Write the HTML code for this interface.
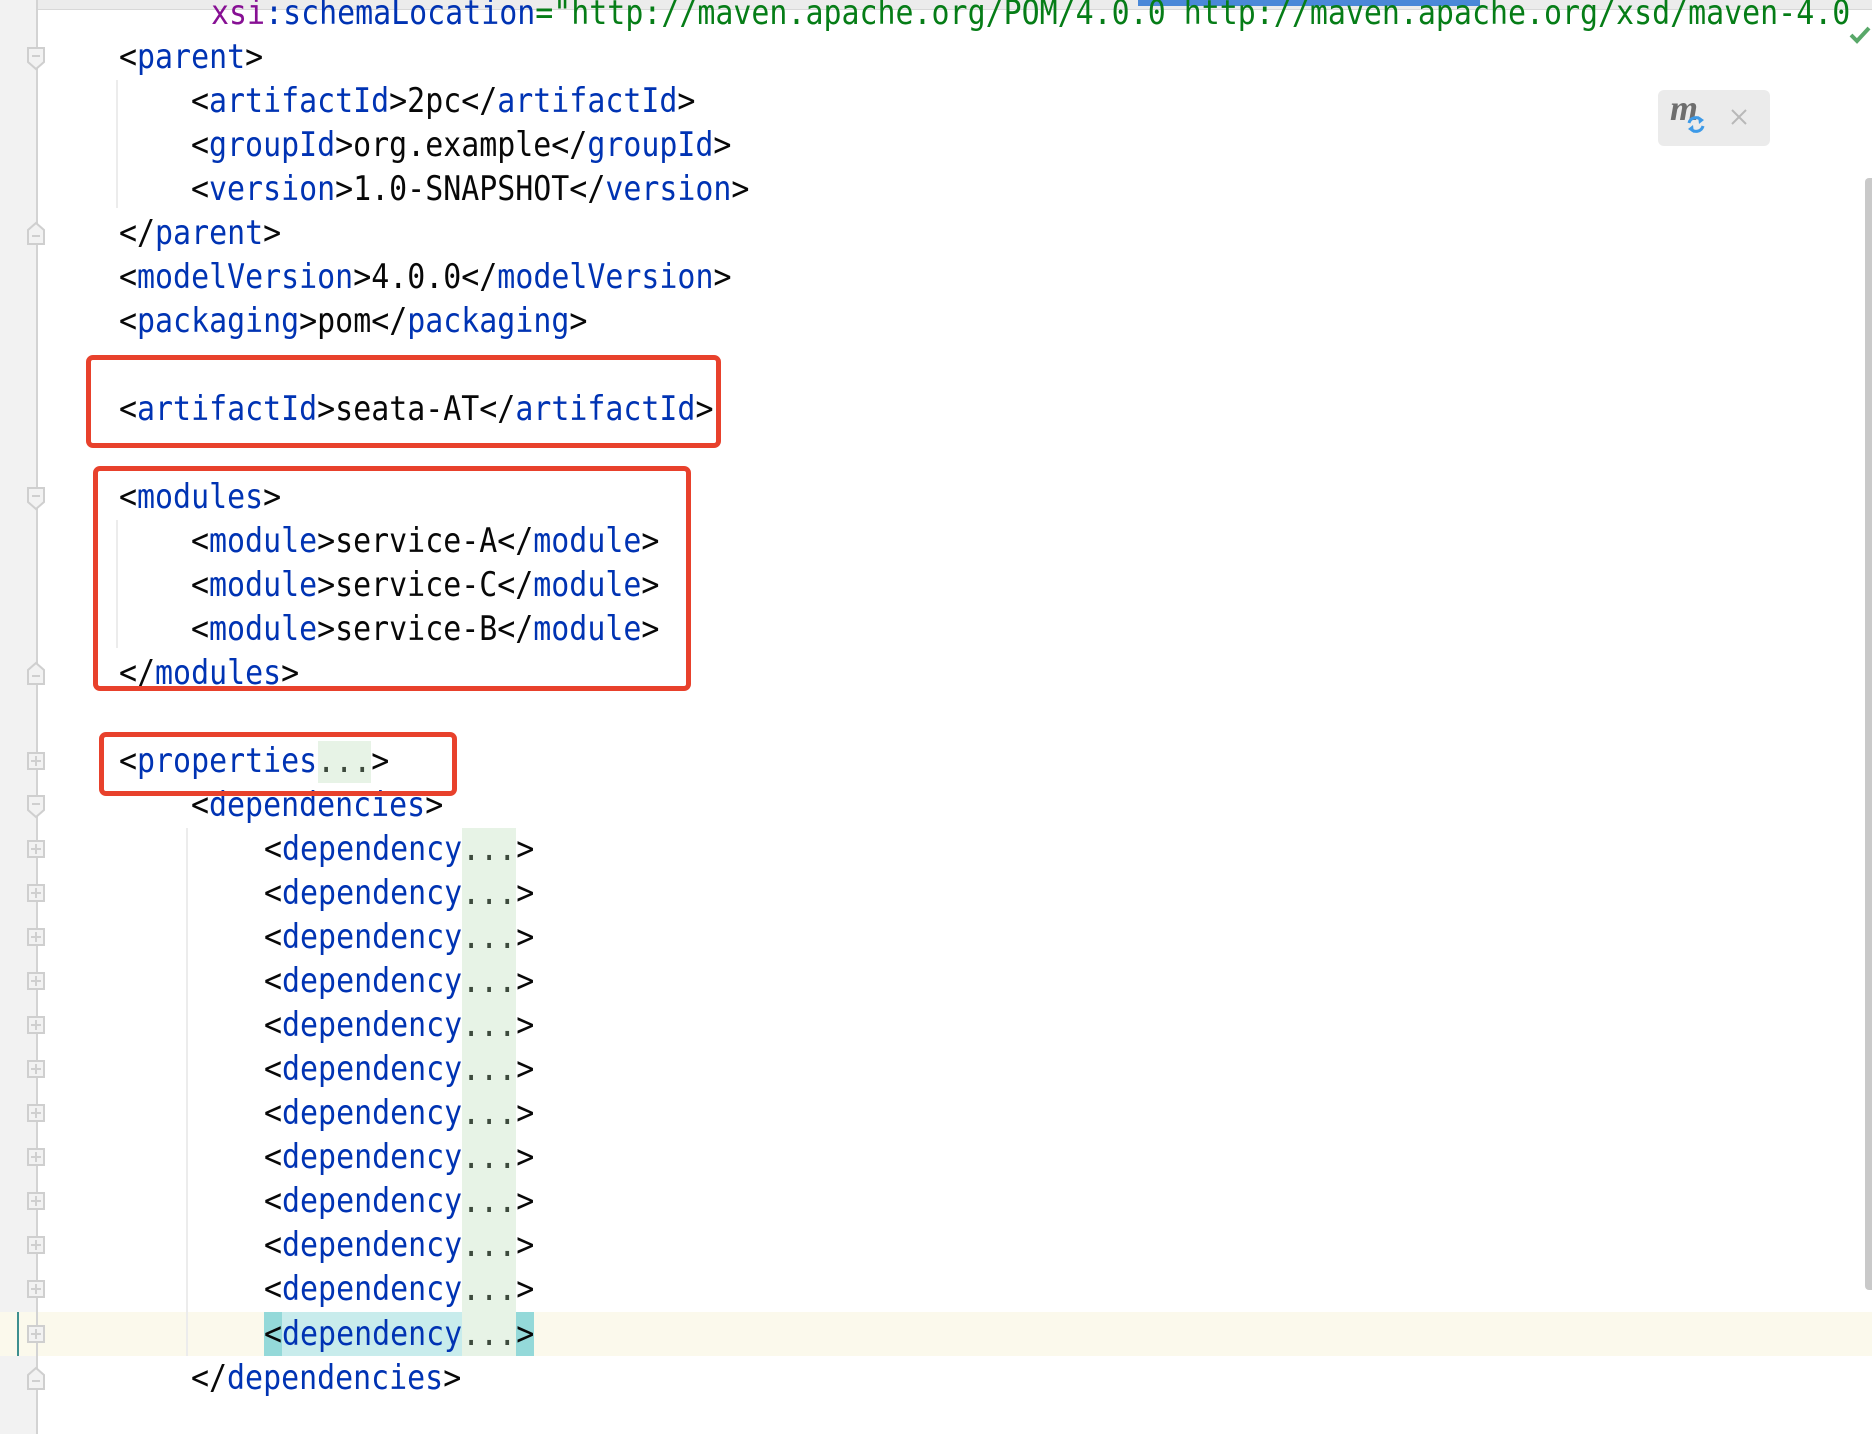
<!DOCTYPE html>
<html><head><meta charset="utf-8"><style>
html,body{margin:0;padding:0;width:1872px;height:1434px;overflow:hidden;background:#fff;position:relative}
.g{position:absolute;left:0;top:0;width:36px;height:1434px;background:#f2f2f2}
.gl{position:absolute;left:36px;top:0;width:2px;height:1434px;background:#d3d3d3}
.l{position:absolute;height:44px;line-height:44px;white-space:pre;font-family:"DejaVu Sans Mono","Liberation Mono",monospace;font-size:34px;color:#080808;transform:scaleX(.88);transform-origin:0 0}
.t{color:#0033b3}
.a{color:#871094}
.s{color:#067d17}
.box{position:absolute;border:5px solid #e8412c;border-radius:7px;box-sizing:border-box}
.f{position:absolute;left:27px}
.ig{position:absolute;width:2px;background:#ececec}
</style></head><body>
<div style="position:absolute;left:0;top:0;width:1872px;height:9px;background:#ececec"></div>
<div style="position:absolute;left:0;top:9px;width:1872px;height:1px;background:#d8d8d8"></div>
<div style="position:absolute;left:1138px;top:0;width:342px;height:6px;background:#4a88d8"></div>
<div class="g"></div>
<div style="position:absolute;left:0;top:1312px;width:1872px;height:44px;background:#fbf9ec"></div>
<div style="position:absolute;left:17px;top:1312px;width:2px;height:44px;background:#3d8f8f"></div>
<div class="gl"></div>

<div class="ig" style="left:116px;top:80px;height:128px"></div>
<div class="ig" style="left:116px;top:520px;height:128px"></div>
<div class="ig" style="left:186px;top:828px;height:528px"></div>

<div style="position:absolute;left:318px;top:741px;width:53px;height:42px;background:#e7f3e6"></div>
<div style="position:absolute;left:462px;top:828px;width:54px;height:528px;background:#e7f3e6"></div>
<div style="position:absolute;left:264px;top:1312px;width:18px;height:44px;background:#94d9d9"></div>
<div style="position:absolute;left:282px;top:1312px;width:180px;height:44px;background:#c8ecec"></div>
<div style="position:absolute;left:516px;top:1312px;width:18px;height:44px;background:#94d9d9"></div>

<div style="position:absolute;left:0;top:0;width:1850px;height:60px;overflow:hidden">
<div class="l" style="left:211px;top:-9px"><span class="a">xsi</span><span class="t">:schemaLocation</span><span class="s">="http://maven.apache.org/POM/4.0.0 http://maven.apache.org/xsd/maven-4.0.0.xsd"</span>&gt;</div>
</div>
<div class="l" style="left:119px;top:35px">&lt;<span class="t">parent</span>&gt;</div>
<div class="l" style="left:191px;top:79px">&lt;<span class="t">artifactId</span>&gt;2pc&lt;/<span class="t">artifactId</span>&gt;</div>
<div class="l" style="left:191px;top:123px">&lt;<span class="t">groupId</span>&gt;org.example&lt;/<span class="t">groupId</span>&gt;</div>
<div class="l" style="left:191px;top:167px">&lt;<span class="t">version</span>&gt;1.0-SNAPSHOT&lt;/<span class="t">version</span>&gt;</div>
<div class="l" style="left:119px;top:211px">&lt;/<span class="t">parent</span>&gt;</div>
<div class="l" style="left:119px;top:255px">&lt;<span class="t">modelVersion</span>&gt;4.0.0&lt;/<span class="t">modelVersion</span>&gt;</div>
<div class="l" style="left:119px;top:299px">&lt;<span class="t">packaging</span>&gt;pom&lt;/<span class="t">packaging</span>&gt;</div>
<div class="l" style="left:119px;top:387px">&lt;<span class="t">artifactId</span>&gt;seata-AT&lt;/<span class="t">artifactId</span>&gt;</div>
<div class="l" style="left:119px;top:475px">&lt;<span class="t">modules</span>&gt;</div>
<div class="l" style="left:191px;top:519px">&lt;<span class="t">module</span>&gt;service-A&lt;/<span class="t">module</span>&gt;</div>
<div class="l" style="left:191px;top:563px">&lt;<span class="t">module</span>&gt;service-C&lt;/<span class="t">module</span>&gt;</div>
<div class="l" style="left:191px;top:607px">&lt;<span class="t">module</span>&gt;service-B&lt;/<span class="t">module</span>&gt;</div>
<div class="l" style="left:119px;top:651px">&lt;/<span class="t">modules</span>&gt;</div>
<div class="l" style="left:119px;top:739px">&lt;<span class="t">properties</span><span style="color:#3d4a3d">...</span>&gt;</div>
<div class="l" style="left:191px;top:783px">&lt;<span class="t">dependencies</span>&gt;</div>
<div class="l" style="left:264px;top:827px">&lt;<span class="t">dependency</span><span style="color:#3d4a3d">...</span>&gt;</div>
<div class="l" style="left:264px;top:871px">&lt;<span class="t">dependency</span><span style="color:#3d4a3d">...</span>&gt;</div>
<div class="l" style="left:264px;top:915px">&lt;<span class="t">dependency</span><span style="color:#3d4a3d">...</span>&gt;</div>
<div class="l" style="left:264px;top:959px">&lt;<span class="t">dependency</span><span style="color:#3d4a3d">...</span>&gt;</div>
<div class="l" style="left:264px;top:1003px">&lt;<span class="t">dependency</span><span style="color:#3d4a3d">...</span>&gt;</div>
<div class="l" style="left:264px;top:1047px">&lt;<span class="t">dependency</span><span style="color:#3d4a3d">...</span>&gt;</div>
<div class="l" style="left:264px;top:1091px">&lt;<span class="t">dependency</span><span style="color:#3d4a3d">...</span>&gt;</div>
<div class="l" style="left:264px;top:1135px">&lt;<span class="t">dependency</span><span style="color:#3d4a3d">...</span>&gt;</div>
<div class="l" style="left:264px;top:1179px">&lt;<span class="t">dependency</span><span style="color:#3d4a3d">...</span>&gt;</div>
<div class="l" style="left:264px;top:1223px">&lt;<span class="t">dependency</span><span style="color:#3d4a3d">...</span>&gt;</div>
<div class="l" style="left:264px;top:1267px">&lt;<span class="t">dependency</span><span style="color:#3d4a3d">...</span>&gt;</div>
<div class="l" style="left:264px;top:1312px">&lt;<span class="t">dependency</span><span style="color:#3d4a3d">...</span>&gt;</div>
<div class="l" style="left:191px;top:1356px">&lt;/<span class="t">dependencies</span>&gt;</div>

<div class="box" style="left:86px;top:355px;width:635px;height:93px"></div>
<div class="box" style="left:93px;top:466px;width:598px;height:225px"></div>
<div class="box" style="left:99px;top:732px;width:358px;height:64px"></div>

<svg class="f" style="top:47px" width="18" height="24"><path d="M1 1H17V15L9 22L1 15Z" fill="#f2f2f2" stroke="#cfcfcf" stroke-width="2"/><path d="M5 9H13" stroke="#cfcfcf" stroke-width="2"/></svg>
<svg class="f" style="top:221px" width="18" height="24"><path d="M1 23H17V9L9 2L1 9Z" fill="#f2f2f2" stroke="#cfcfcf" stroke-width="2"/><path d="M5 15H13" stroke="#cfcfcf" stroke-width="2"/></svg>
<svg class="f" style="top:487px" width="18" height="24"><path d="M1 1H17V15L9 22L1 15Z" fill="#f2f2f2" stroke="#cfcfcf" stroke-width="2"/><path d="M5 9H13" stroke="#cfcfcf" stroke-width="2"/></svg>
<svg class="f" style="top:661px" width="18" height="24"><path d="M1 23H17V9L9 2L1 9Z" fill="#f2f2f2" stroke="#cfcfcf" stroke-width="2"/><path d="M5 15H13" stroke="#cfcfcf" stroke-width="2"/></svg>
<svg class="f" style="top:752px" width="18" height="18"><rect x="1" y="1" width="16" height="16" fill="#f2f2f2" stroke="#cfcfcf" stroke-width="2"/><path d="M4 9H14M9 4V14" stroke="#cfcfcf" stroke-width="2"/></svg>
<svg class="f" style="top:795px" width="18" height="24"><path d="M1 1H17V15L9 22L1 15Z" fill="#f2f2f2" stroke="#cfcfcf" stroke-width="2"/><path d="M5 9H13" stroke="#cfcfcf" stroke-width="2"/></svg>
<svg class="f" style="top:840px" width="18" height="18"><rect x="1" y="1" width="16" height="16" fill="#f2f2f2" stroke="#cfcfcf" stroke-width="2"/><path d="M4 9H14M9 4V14" stroke="#cfcfcf" stroke-width="2"/></svg>
<svg class="f" style="top:884px" width="18" height="18"><rect x="1" y="1" width="16" height="16" fill="#f2f2f2" stroke="#cfcfcf" stroke-width="2"/><path d="M4 9H14M9 4V14" stroke="#cfcfcf" stroke-width="2"/></svg>
<svg class="f" style="top:928px" width="18" height="18"><rect x="1" y="1" width="16" height="16" fill="#f2f2f2" stroke="#cfcfcf" stroke-width="2"/><path d="M4 9H14M9 4V14" stroke="#cfcfcf" stroke-width="2"/></svg>
<svg class="f" style="top:972px" width="18" height="18"><rect x="1" y="1" width="16" height="16" fill="#f2f2f2" stroke="#cfcfcf" stroke-width="2"/><path d="M4 9H14M9 4V14" stroke="#cfcfcf" stroke-width="2"/></svg>
<svg class="f" style="top:1016px" width="18" height="18"><rect x="1" y="1" width="16" height="16" fill="#f2f2f2" stroke="#cfcfcf" stroke-width="2"/><path d="M4 9H14M9 4V14" stroke="#cfcfcf" stroke-width="2"/></svg>
<svg class="f" style="top:1060px" width="18" height="18"><rect x="1" y="1" width="16" height="16" fill="#f2f2f2" stroke="#cfcfcf" stroke-width="2"/><path d="M4 9H14M9 4V14" stroke="#cfcfcf" stroke-width="2"/></svg>
<svg class="f" style="top:1104px" width="18" height="18"><rect x="1" y="1" width="16" height="16" fill="#f2f2f2" stroke="#cfcfcf" stroke-width="2"/><path d="M4 9H14M9 4V14" stroke="#cfcfcf" stroke-width="2"/></svg>
<svg class="f" style="top:1148px" width="18" height="18"><rect x="1" y="1" width="16" height="16" fill="#f2f2f2" stroke="#cfcfcf" stroke-width="2"/><path d="M4 9H14M9 4V14" stroke="#cfcfcf" stroke-width="2"/></svg>
<svg class="f" style="top:1192px" width="18" height="18"><rect x="1" y="1" width="16" height="16" fill="#f2f2f2" stroke="#cfcfcf" stroke-width="2"/><path d="M4 9H14M9 4V14" stroke="#cfcfcf" stroke-width="2"/></svg>
<svg class="f" style="top:1236px" width="18" height="18"><rect x="1" y="1" width="16" height="16" fill="#f2f2f2" stroke="#cfcfcf" stroke-width="2"/><path d="M4 9H14M9 4V14" stroke="#cfcfcf" stroke-width="2"/></svg>
<svg class="f" style="top:1280px" width="18" height="18"><rect x="1" y="1" width="16" height="16" fill="#f2f2f2" stroke="#cfcfcf" stroke-width="2"/><path d="M4 9H14M9 4V14" stroke="#cfcfcf" stroke-width="2"/></svg>
<svg class="f" style="top:1325px" width="18" height="18"><rect x="1" y="1" width="16" height="16" fill="#f2f2f2" stroke="#cfcfcf" stroke-width="2"/><path d="M4 9H14M9 4V14" stroke="#cfcfcf" stroke-width="2"/></svg>
<svg class="f" style="top:1366px" width="18" height="24"><path d="M1 23H17V9L9 2L1 9Z" fill="#f2f2f2" stroke="#cfcfcf" stroke-width="2"/><path d="M5 15H13" stroke="#cfcfcf" stroke-width="2"/></svg>

<svg style="position:absolute;left:1848px;top:24px" width="24" height="22"><path d="M3 11L9 17L21 4" fill="none" stroke="#59a869" stroke-width="4"/></svg>

<div style="position:absolute;left:1658px;top:90px;width:112px;height:56px;background:#ebebeb;border-radius:6px"></div>
<div style="position:absolute;left:1670px;top:88px;font:italic bold 36px 'Liberation Serif',serif;color:#6e6e6e;line-height:40px">m</div>
<svg style="position:absolute;left:1686px;top:114px" width="20" height="20"><path d="M3 9A7 7 0 0 1 15 6M17 12A7 7 0 0 1 5 15" fill="none" stroke="#3d9ae8" stroke-width="3"/><path d="M12 2L18 6L13 10Z M8 19L2 15L7 11Z" fill="#3d9ae8"/></svg>
<svg style="position:absolute;left:1731px;top:109px" width="16" height="16"><path d="M1 1L15 15M15 1L1 15" stroke="#b8b8b8" stroke-width="2"/></svg>

<div style="position:absolute;left:1865px;top:178px;width:7px;height:1112px;background:#c9c9c9;border-radius:4px 0 0 4px"></div>
</body></html>
